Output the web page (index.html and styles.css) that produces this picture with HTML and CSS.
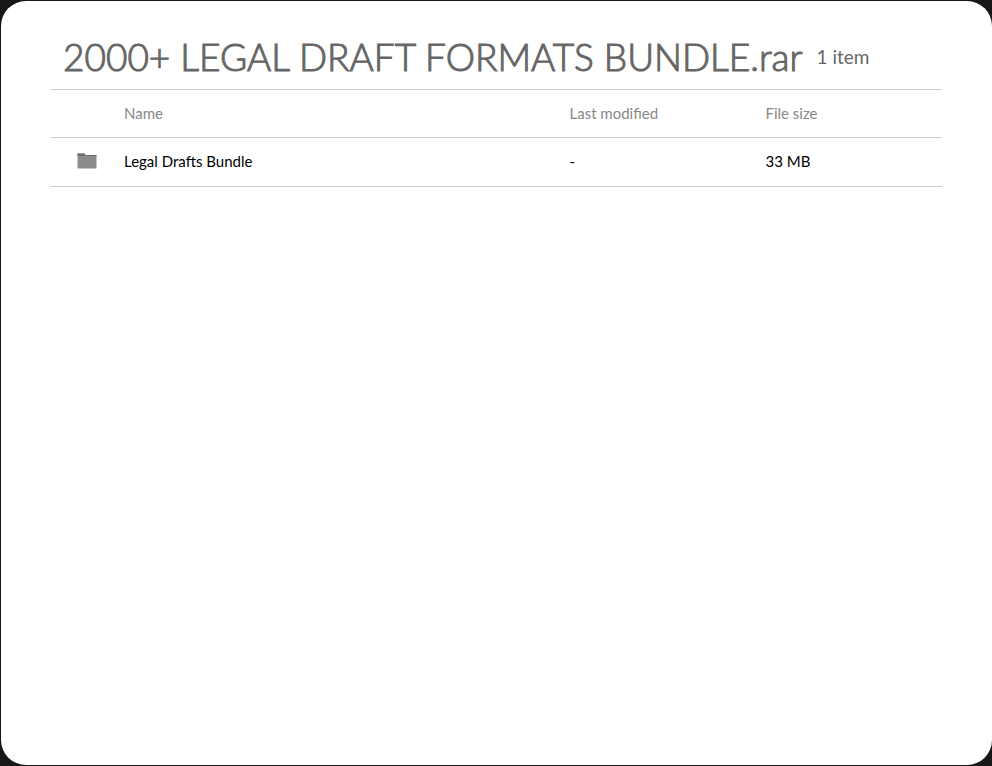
FILE: index.html
```
<!DOCTYPE html>
<html lang="en">
<head>
    <meta charset="UTF-8">
    <meta name="viewport" content="width=device-width, initial-scale=1.0">
    <title>2000+ LEGAL DRAFT FORMATS BUNDLE.rar</title>
    <link rel="stylesheet" href="styles.css">
</head>
<body>
    <main class="viewer">
        <header class="archive-header">
            <h1>2000+ LEGAL DRAFT FORMATS BUNDLE.rar</h1>
            <span class="item-count">1 item</span>
        </header>
        <table class="file-table">
            <thead>
                <tr>
                    <th class="col-icon"></th>
                    <th class="col-name">Name</th>
                    <th class="col-modified">Last modified</th>
                    <th class="col-size">File size</th>
                </tr>
            </thead>
            <tbody>
                <tr>
                    <td class="col-icon">
                        <svg class="folder-icon" width="20" height="16" viewBox="0 0 20 16" aria-hidden="true">
                            <path d="M0.5 0.5h7l1 1.5h11v13.5h-19z" fill="#8b8b8b"/>
                            <path d="M0.5 0.5h7l1 1.5h11v1h-19z" fill="#6e6e6e"/>
                        </svg>
                    </td>
                    <td>Legal Drafts Bundle</td>
                    <td>-</td>
                    <td>33 MB</td>
                </tr>
            </tbody>
        </table>
    </main>
</body>
</html>
```
FILE: styles.css
```
* {
    box-sizing: border-box;
}

body {
    margin: 0;
    padding: 1px 0 1px 1px;
    background-color: #171717;
    font-family: Lato, "Open Sans", sans-serif;
}

.viewer {
    min-height: calc(100vh - 2px);
    padding: 24px 50px;
    background-color: #fff;
    border-radius: 25px;
}

.archive-header {
    display: flex;
    align-items: center;
    height: 64px;
    padding: 0 0 2px 12px;
    color: #666;
    white-space: nowrap;
}

h1 {
    margin: 0;
    font-size: 37px;
    font-weight: 300;
    -webkit-text-stroke: 1px #666;
}

.item-count {
    margin-left: 14px;
    font-size: 19px;
}

.file-table {
    width: 100%;
    table-layout: fixed;
    border-collapse: collapse;
    border-top: 1px solid #ccc;
    font-size: 15px;
}

.file-table tr {
    height: 49px;
    border-bottom: 1px solid #ccc;
}

.file-table thead tr {
    height: 48px;
}

.file-table th,
.file-table td {
    padding: 0 0 2px;
    font-weight: 400;
    text-align: left;
}

.file-table th {
    color: #888;
}

.file-table .col-icon {
    width: 73px;
    padding-left: 26px;
}

.col-name {
    width: 50%;
}

.col-modified {
    width: 22%;
}

.folder-icon {
    display: block;
}
```
